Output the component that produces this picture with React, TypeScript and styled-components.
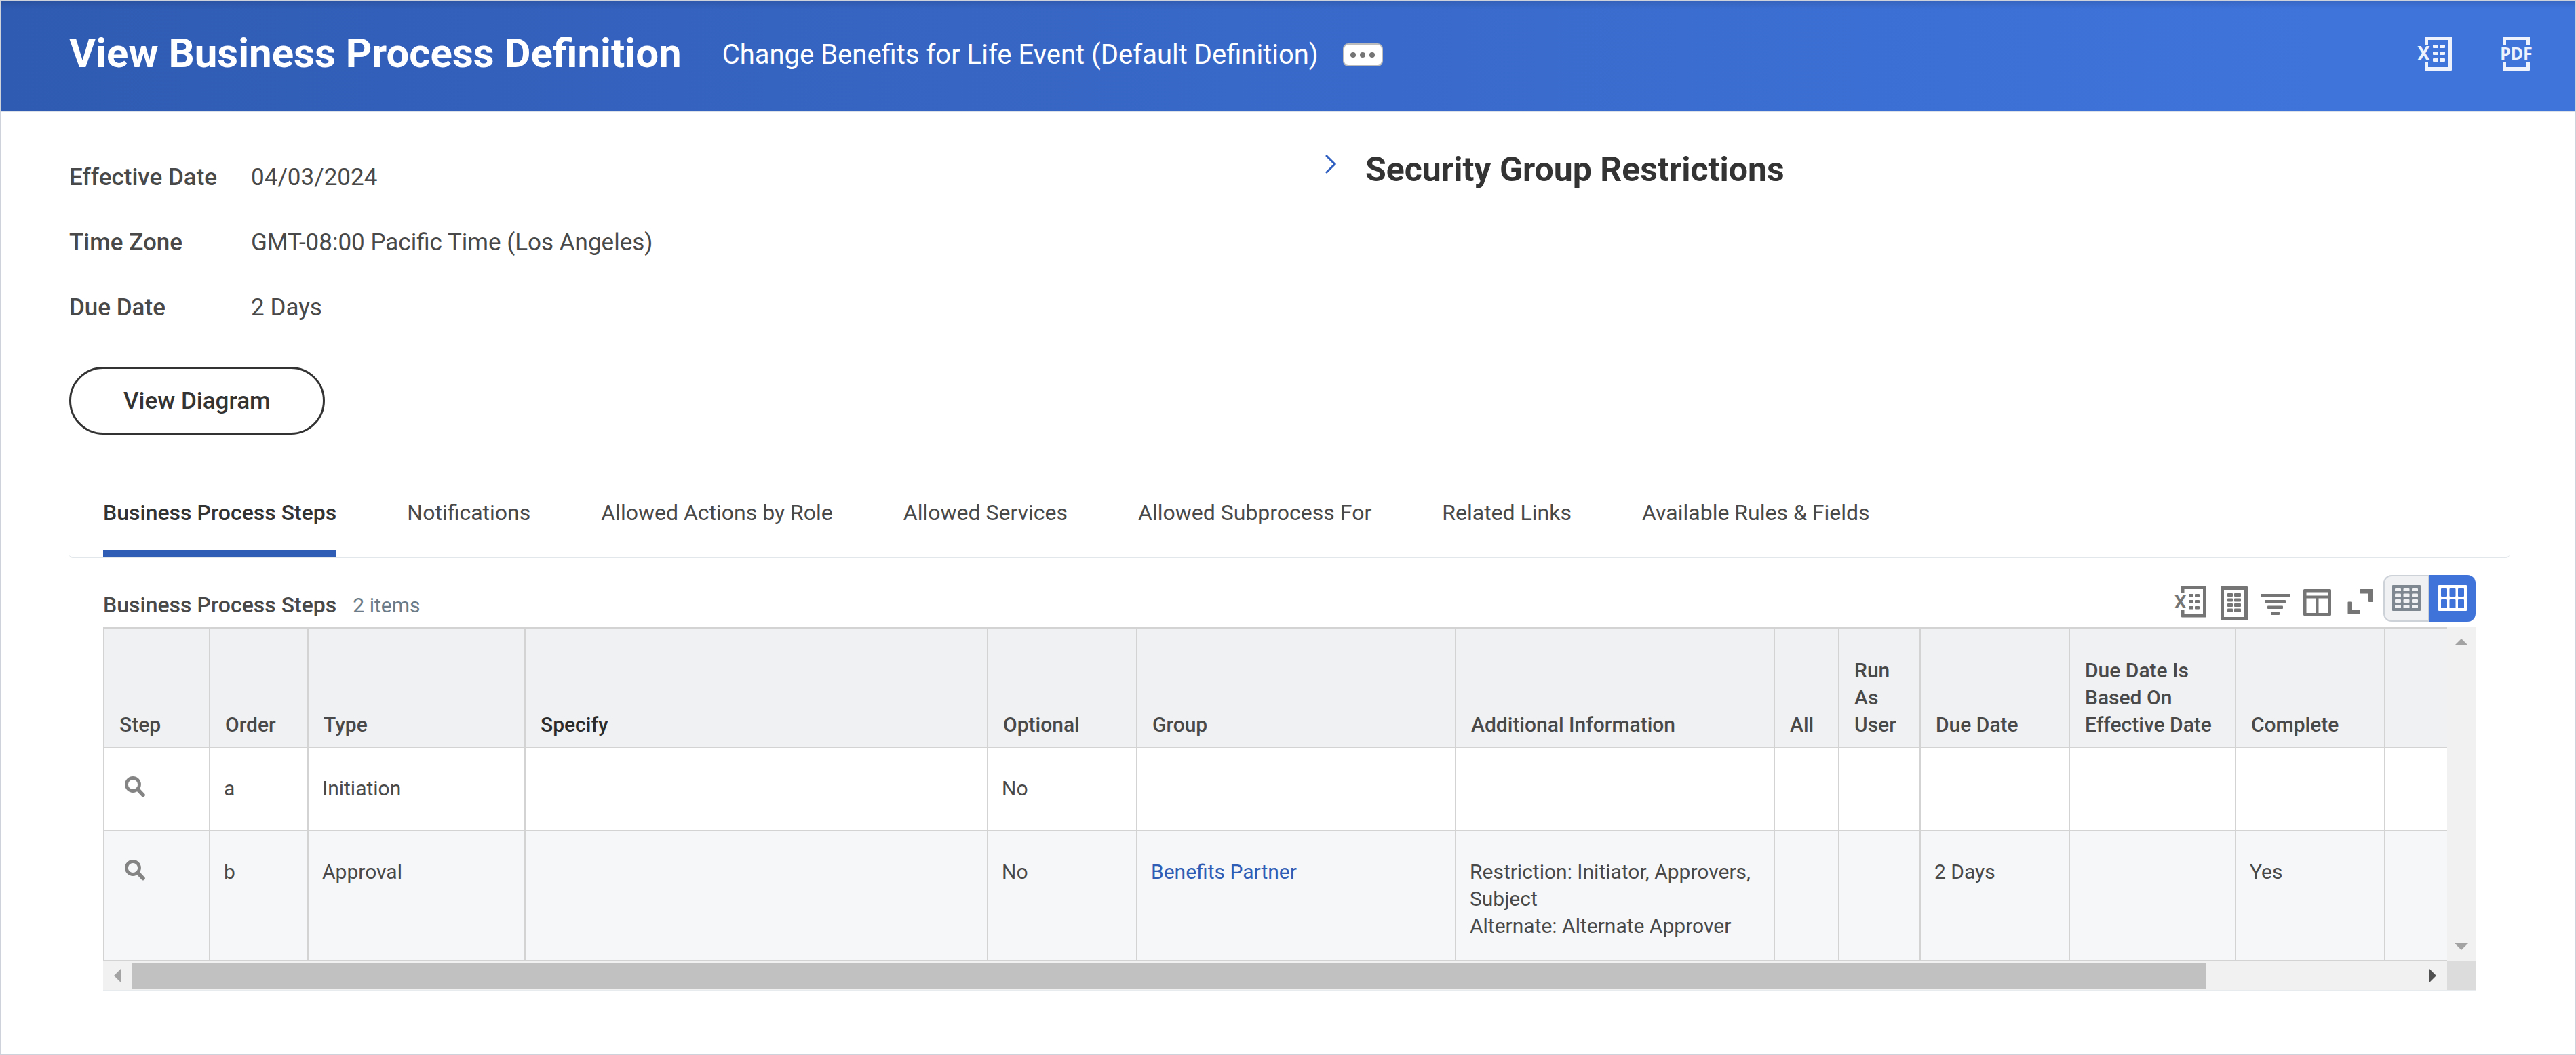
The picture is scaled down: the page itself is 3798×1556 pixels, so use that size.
import React, { useEffect, useRef, useState } from "react";
import styled, { createGlobalStyle } from "styled-components";

const GlobalStyle = createGlobalStyle`
  *, *::before, *::after { box-sizing: border-box; }
  body {
    margin: 0;
    background: #ffffff;
    color: #494949;
    font-family: Roboto, "Liberation Sans", sans-serif;
  }
  button { font-family: inherit; cursor: pointer; }
`;

const Page = styled.div`
  min-height: 100vh;
  border: 2px solid #ced3db;
`;

const Header = styled.header`
  display: flex;
  align-items: center;
  height: 163px;
  padding: 0 60px 7px 100px;
  border-bottom: 2px solid #dde1e8;
  background: linear-gradient(90deg, #2f5bb2 0%, #3563c0 30%, #3f74db 90%, #3f74db 100%);
  box-shadow: inset 0 12px 10px -8px rgba(0, 0, 0, 0.12);
  color: #ffffff;
`;

const PageTitle = styled.h1`
  margin: 0 60px 0 0;
  font-size: 60px;
  line-height: 70px;
  font-weight: 700;
`;

const Subject = styled.div`
  display: flex;
  flex: 1;
  align-items: center;
  gap: 36px;
  padding-top: 4px;
`;

const SubjectName = styled.span`
  font-size: 40px;
  line-height: 50px;
`;

const MoreButton = styled.button`
  display: flex;
  align-items: center;
  justify-content: center;
  gap: 6px;
  width: 59px;
  height: 34px;
  padding: 0;
  border: 2px solid #bcbcbc;
  border-radius: 8px;
  background: #ffffff;
`;

const Dot = styled.span`
  width: 8px;
  height: 8px;
  border-radius: 50%;
  background: #757575;
`;

const ExportActions = styled.div`
  display: flex;
  gap: 70px;
`;

const IconButton = styled.button`
  display: flex;
  padding: 0;
  border: 0;
  background: none;
  color: inherit;
`;

const Main = styled.main`
  padding: 55px 96px 0 100px;
`;

const Summary = styled.div`
  display: grid;
  grid-template-columns: 1fr 1fr;
  gap: 100px;
`;

const Details = styled.div`
  padding-top: 19px;
`;

const FieldList = styled.dl`
  display: grid;
  grid-template-columns: max-content 1fr;
  gap: 50px;
  margin: 0 0 64px;
  font-size: 35px;
  line-height: 46px;
`;

const FieldLabel = styled.dt`
  font-weight: 500;
`;

const FieldValue = styled.dd`
  margin: 0;
`;

const PillButton = styled.button`
  height: 100px;
  padding: 0 77px;
  border: 3px solid #333333;
  border-radius: 50px;
  background: #ffffff;
  color: #333333;
  font-size: 35px;
  font-weight: 500;
`;

const Disclosure = styled.button`
  display: flex;
  gap: 36px;
  padding: 0;
  border: 0;
  background: none;
  color: inherit;
  font-size: inherit;
  font-weight: inherit;
  line-height: inherit;
`;

const SectionHeading = styled.h2`
  margin: 0;
  color: #333333;
  font-size: 50px;
  line-height: 60px;
  font-weight: 700;
`;

const TabList = styled.div`
  display: flex;
  gap: 104px;
  margin-top: 60px;
  padding: 0 50px;
  border-bottom: 2px solid #e2e7eb;
  border-radius: 0 0 5px 5px;
`;

const Tab = styled.button<{ $active: boolean }>`
  padding: 35px 0;
  border: 0;
  border-bottom: 10px solid ${(p) => (p.$active ? "#2f5db5" : "transparent")};
  background: none;
  color: ${(p) => (p.$active ? "#333333" : "#494949")};
  font-size: 32px;
  line-height: 40px;
  font-weight: ${(p) => (p.$active ? 500 : 400)};
  white-space: nowrap;
`;

const TabPanel = styled.section`
  padding: 25px 50px 0;
`;

const GridBar = styled.div`
  display: flex;
  align-items: flex-end;
  justify-content: space-between;
  padding-bottom: 8px;
`;

const GridCaption = styled.div`
  display: flex;
  align-items: baseline;
  gap: 24px;
  padding-bottom: 4px;
`;

const GridTitle = styled.h3`
  margin: 0;
  font-size: 32px;
  line-height: 40px;
  font-weight: 500;
`;

const ItemCount = styled.span`
  color: #6c7b88;
  font-size: 30px;
  line-height: 40px;
`;

const Toolbar = styled.div`
  display: flex;
  align-items: flex-end;
  gap: 12px;
  color: #757575;
`;

const ViewToggle = styled.div`
  display: flex;
  height: 69px;
`;

const ToggleButton = styled.button<{ $active?: boolean }>`
  display: flex;
  justify-content: center;
  width: 68px;
  padding: ${(p) => (p.$active ? "15px 0 0" : "13px 0 0")};
  border: 2px solid #cdd2d9;
  border-width: ${(p) => (p.$active ? "0" : "2px")};
  border-radius: ${(p) => (p.$active ? "0 12px 12px 0" : "12px 0 0 12px")};
  background: ${(p) => (p.$active ? "#3f73da" : "#eff1f2")};
  color: ${(p) => (p.$active ? "#ffffff" : "#7f8791")};
`;

const GridFrame = styled.div`
  display: grid;
  grid-template-columns: minmax(0, 1fr) 42px;
  border-bottom: 2px solid #e8ebee;
`;

const GridViewport = styled.div`
  overflow-x: auto;
  scrollbar-width: none;
`;

const DataTable = styled.table`
  table-layout: fixed;
  width: 3811px;
  border: solid #d3d3d3;
  border-width: 2px 0 0 2px;
  border-spacing: 0;
  font-size: 30px;
  line-height: 40px;
`;

const HeadCell = styled.th<{ $strong?: boolean }>`
  padding: 42px 22px 12px;
  border: solid #d3d3d3;
  border-width: 0 2px 2px 0;
  background: #eff1f2;
  color: ${(p) => (p.$strong ? "#2b2b2b" : "#494949")};
  font-weight: 500;
  text-align: left;
  vertical-align: bottom;
`;

const BodyRow = styled.tr`
  background: #ffffff;
  &:nth-child(even) { background: #f5f7f9; }
`;

const Cell = styled.td`
  padding: 40px 20px 30px;
  border: solid #d3d3d3;
  border-width: 0 2px 2px 0;
  vertical-align: top;
`;

const CellLink = styled.a`
  color: #2f5db5;
  text-decoration: none;
`;

const Track = styled.div<{ $vertical?: boolean }>`
  display: flex;
  flex-direction: ${(p) => (p.$vertical ? "column" : "row")};
  justify-content: space-between;
  background: #f1f1f1;
`;

const ArrowButton = styled.button<{ $muted?: boolean }>`
  display: flex;
  align-items: center;
  justify-content: center;
  width: 42px;
  height: 42px;
  padding: 0;
  border: 0;
  background: none;
  color: ${(p) => (p.$muted ? "#a3a3a3" : "#505050")};
`;

const ThumbLane = styled.div`
  flex: 1;
  padding: 2px 0;
  overflow: hidden;
`;

const Thumb = styled.div`
  height: 38px;
  background: #c1c1c1;
`;

const TrackCorner = styled.div`
  background: #dcdcdc;
`;

const blocks = (xs: number[], ys: number[], widths: number[], h: number) =>
  ys.flatMap((y) => xs.map((x, i) => <rect key={`${x}-${y}`} x={x} y={y} width={widths[i]} height={h} rx="1" />));

const GLYPH_FONT = '"Noto Sans", "Open Sans", sans-serif';

const HeaderExcelIcon = () => (
  <svg width="52" height="50" viewBox="0 0 52 50" fill="#eef2fc" aria-hidden="true">
    <path d="M11 1q0-1 1-1h38q1 0 1 1v48q0 1-1 1H12q-1 0-1-1V38h5v7h30V5H16v7h-5z" />
    <text x="0" y="35" fontFamily={GLYPH_FONT} fontWeight="700" fontSize="28">X</text>
    {blocks([23, 33], [12, 22, 32], [8, 8], 5)}
  </svg>
);

const HeaderPdfIcon = () => (
  <svg width="50" height="50" viewBox="0 0 50 50" fill="#eef2fc" aria-hidden="true">
    <path d="M4 1q0-1 1-1h38q1 0 1 1v11h-5V5H9v7H4zM4 38h5v7h30v-7h5v11q0 1-1 1H5q-1 0-1-1z" />
    <text x="24" y="34" textAnchor="middle" fontFamily={GLYPH_FONT} fontWeight="700" fontSize="25">PDF</text>
  </svg>
);

const ChevronIcon = () => (
  <svg width="26" height="44" viewBox="0 0 26 44" fill="none" stroke="#2f5fc0" strokeWidth="3" aria-hidden="true">
    <path d="M5 10L17 22L5 34" strokeLinecap="round" />
  </svg>
);

const ToolSvg = styled.svg.attrs({ width: 50, height: 52, viewBox: "-2 0 50 52", "aria-hidden": true })`
  overflow: visible;
  fill: currentColor;
`;

const ExcelIcon = () => (
  <ToolSvg>
    <path d="M10 0q0-1 1-1h34.500q1 0 1 1v44.500q0 1-1 1H11q-1 0-1-1V34.500h4.500V41H42V3.500H14.500V10H10z" />
    <text x="0" y="32" fontFamily={GLYPH_FONT} fontWeight="700" fontSize="26">X</text>
    {blocks([21, 30], [11, 20, 29], [7, 7], 4.5)}
  </ToolSvg>
);

const SheetIcon = () => (
  <ToolSvg>
    <path fillRule="evenodd" d="M7 0h38q1 0 1 1v48q0 1-1 1H7q-1 0-1-1V1q0-1 1-1zM11 5v40h30V5z" />
    {blocks([16, 26], [10, 17.5, 25, 32.5], [8, 10], 5)}
  </ToolSvg>
);

const FilterIcon = () => (
  <ToolSvg>
    <rect x="3" y="11" width="44" height="4.500" rx="1" />
    <rect x="9" y="20" width="31" height="4.500" rx="1" />
    <rect x="13" y="28.500" width="23" height="4.500" rx="1" />
    <rect x="18" y="37.500" width="13" height="4.500" rx="1" />
  </ToolSvg>
);

const ColumnsIcon = () => (
  <ToolSvg>
    <path
      fillRule="evenodd"
      d="M5.500 4h38q1.500 0 1.500 1.500v36q0 1.500-1.500 1.500h-38Q4 43 4 41.500v-36Q4 4 5.500 4zM8.500 8.500v5h32v-5zM8.500 17.500v21.500h14V17.500zM26.500 17.500v21.500h14V17.500z"
    />
  </ToolSvg>
);

const ExpandIcon = () => (
  <ToolSvg>
    <path d="M26.500 4h17q1 0 1 1v17q0 1-1 1h-4.500q-1 0-1-1V10.500H26.500q-1 0-1-1V5q0-1 1-1z" />
    <path d="M8.500 22.500h4.500q1 0 1 1V34h11q1 0 1 1v4.500q0 1-1 1H8.500q-1 0-1-1v-16q0-1 1-1z" />
  </ToolSvg>
);

const DenseGridIcon = () => (
  <svg width="42" height="38" viewBox="0 0 42 38" aria-hidden="true">
    <rect width="42" height="38" rx="1" fill="currentColor" />
    <g fill="#eff1f2">{blocks([4, 16.5, 29], [4, 12.5, 21, 29], [9, 9, 9], 5)}</g>
  </svg>
);

const WideGridIcon = () => (
  <svg width="42" height="38" viewBox="0 0 42 38" aria-hidden="true">
    <rect width="42" height="38" rx="1" fill="currentColor" />
    <g fill="#3f73da">{blocks([4, 16.5, 29], [4, 21], [9, 9, 9], 13)}</g>
  </svg>
);

const SearchIcon = () => (
  <svg width="50" height="51" viewBox="0 0 50 51" fill="none" stroke="#848484" aria-hidden="true">
    <circle cx="22" cy="14" r="9.500" strokeWidth="4.800" />
    <path d="M29 21L37 29.500" strokeWidth="5.600" strokeLinecap="round" />
  </svg>
);

const arrowPaths = {
  left: "M26 11V31L16 21z",
  right: "M16 11V31L26 21z",
  up: "M11 27H31L21 17z",
  down: "M11 15H31L21 25z",
};

const ArrowGlyph = ({ to }: { to: keyof typeof arrowPaths }) => (
  <svg width="42" height="42" viewBox="0 0 42 42" fill="currentColor" aria-hidden="true">
    <path d={arrowPaths[to]} />
  </svg>
);

const fields = [
  ["Effective Date", "04/03/2024"],
  ["Time Zone", "GMT-08:00 Pacific Time (Los Angeles)"],
  ["Due Date", "2 Days"],
];

const tabs = [
  "Business Process Steps",
  "Notifications",
  "Allowed Actions by Role",
  "Allowed Services",
  "Allowed Subprocess For",
  "Related Links",
  "Available Rules & Fields",
];

const columns = [
  { name: "Step", width: 156 },
  { name: "Order", width: 145 },
  { name: "Type", width: 320 },
  { name: "Specify", width: 682 },
  { name: "Optional", width: 220 },
  { name: "Group", width: 470 },
  { name: "Additional Information", width: 470 },
  { name: "All", width: 95 },
  { name: "Run As User", width: 120 },
  { name: "Due Date", width: 220 },
  { name: "Due Date Is Based On Effective Date", width: 245 },
  { name: "Complete", width: 220 },
  { name: "", width: 446 },
];

interface Step {
  order: string;
  type: string;
  optional: string;
  group?: string;
  info?: string[];
  dueDate?: string;
  complete?: string;
}

const steps: Step[] = [
  { order: "a", type: "Initiation", optional: "No" },
  {
    order: "b",
    type: "Approval",
    optional: "No",
    group: "Benefits Partner",
    info: ["Restriction: Initiator, Approvers, Subject", "Alternate: Alternate Approver"],
    dueDate: "2 Days",
    complete: "Yes",
  },
];

function StepsGrid() {
  const viewport = useRef<HTMLDivElement>(null);
  const [thumb, setThumb] = useState({ size: 91, start: 0 });

  const measure = () => {
    const el = viewport.current;
    if (!el) return;
    setThumb({
      size: (el.clientWidth / el.scrollWidth) * 100,
      start: (el.scrollLeft / el.scrollWidth) * 100,
    });
  };

  useEffect(() => {
    measure();
    window.addEventListener("resize", measure);
    return () => window.removeEventListener("resize", measure);
  }, []);

  const scrollBy = (left: number) => viewport.current?.scrollBy({ left });

  return (
    <GridFrame>
      <GridViewport ref={viewport} onScroll={measure}>
        <DataTable aria-label="Business Process Steps">
          <colgroup>
            {columns.map((c) => (
              <col key={c.name} width={c.width} />
            ))}
          </colgroup>
          <thead>
            <tr>
              {columns.map((c) => (
                <HeadCell key={c.name} scope="col" $strong={c.name === "Specify"}>
                  {c.name}
                </HeadCell>
              ))}
            </tr>
          </thead>
          <tbody>
            {steps.map((s) => (
              <BodyRow key={s.order}>
                <Cell>
                  <IconButton aria-label={`View step ${s.order}`}>
                    <SearchIcon />
                  </IconButton>
                </Cell>
                <Cell>{s.order}</Cell>
                <Cell>{s.type}</Cell>
                <Cell />
                <Cell>{s.optional}</Cell>
                <Cell>{s.group && <CellLink href="#group">{s.group}</CellLink>}</Cell>
                <Cell>
                  {s.info?.map((line) => (
                    <div key={line}>{line}</div>
                  ))}
                </Cell>
                <Cell />
                <Cell />
                <Cell>{s.dueDate}</Cell>
                <Cell />
                <Cell>{s.complete}</Cell>
                <Cell />
              </BodyRow>
            ))}
          </tbody>
        </DataTable>
      </GridViewport>
      <Track $vertical>
        <ArrowButton $muted aria-label="Scroll up">
          <ArrowGlyph to="up" />
        </ArrowButton>
        <ArrowButton $muted aria-label="Scroll down">
          <ArrowGlyph to="down" />
        </ArrowButton>
      </Track>
      <Track>
        <ArrowButton $muted aria-label="Scroll left" onClick={() => scrollBy(-100)}>
          <ArrowGlyph to="left" />
        </ArrowButton>
        <ThumbLane>
          <Thumb style={{ width: `${thumb.size}%`, marginLeft: `${thumb.start}%` }} />
        </ThumbLane>
        <ArrowButton aria-label="Scroll right" onClick={() => scrollBy(100)}>
          <ArrowGlyph to="right" />
        </ArrowButton>
      </Track>
      <TrackCorner />
    </GridFrame>
  );
}

export default function App() {
  const [activeTab, setActiveTab] = useState(tabs[0]);

  return (
    <Page>
      <GlobalStyle />
      <Header>
        <PageTitle>View Business Process Definition</PageTitle>
        <Subject>
          <SubjectName>Change Benefits for Life Event (Default Definition)</SubjectName>
          <MoreButton aria-label="Related actions">
            <Dot />
            <Dot />
            <Dot />
          </MoreButton>
        </Subject>
        <ExportActions>
          <IconButton aria-label="Export to Excel">
            <HeaderExcelIcon />
          </IconButton>
          <IconButton aria-label="View printable version">
            <HeaderPdfIcon />
          </IconButton>
        </ExportActions>
      </Header>
      <Main>
        <Summary>
          <Details>
            <FieldList>
              {fields.map(([label, value]) => (
                <React.Fragment key={label}>
                  <FieldLabel>{label}</FieldLabel>
                  <FieldValue>{value}</FieldValue>
                </React.Fragment>
              ))}
            </FieldList>
            <PillButton>View Diagram</PillButton>
          </Details>
          <SectionHeading>
            <Disclosure aria-expanded="false">
              <ChevronIcon />
              Security Group Restrictions
            </Disclosure>
          </SectionHeading>
        </Summary>
        <TabList role="tablist">
          {tabs.map((name) => (
            <Tab
              key={name}
              role="tab"
              aria-selected={name === activeTab}
              $active={name === activeTab}
              onClick={() => setActiveTab(name)}
            >
              {name}
            </Tab>
          ))}
        </TabList>
        <TabPanel role="tabpanel">
          <GridBar>
            <GridCaption>
              <GridTitle>Business Process Steps</GridTitle>
              <ItemCount>2 items</ItemCount>
            </GridCaption>
            <Toolbar>
              <IconButton aria-label="Export to Excel">
                <ExcelIcon />
              </IconButton>
              <IconButton aria-label="Worksheet">
                <SheetIcon />
              </IconButton>
              <IconButton aria-label="Filter">
                <FilterIcon />
              </IconButton>
              <IconButton aria-label="Select columns">
                <ColumnsIcon />
              </IconButton>
              <IconButton aria-label="Expand table">
                <ExpandIcon />
              </IconButton>
              <ViewToggle>
                <ToggleButton aria-label="Dense rows" aria-pressed="false">
                  <DenseGridIcon />
                </ToggleButton>
                <ToggleButton $active aria-label="Wide rows" aria-pressed="true">
                  <WideGridIcon />
                </ToggleButton>
              </ViewToggle>
            </Toolbar>
          </GridBar>
          <StepsGrid />
        </TabPanel>
      </Main>
    </Page>
  );
}
